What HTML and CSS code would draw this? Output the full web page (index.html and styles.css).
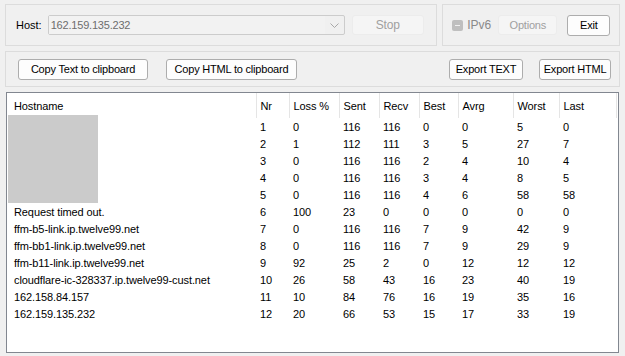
FILE: index.html
```html
<!DOCTYPE html>
<html lang="en">
<head>
    <meta charset="UTF-8">
    <title>WinMTR</title>
    <link rel="stylesheet" href="styles.css">
</head>
<body>

<div class="top-row">
    <!-- host + stop -->
    <div class="group group-host">
        <span class="host-label">Host:</span>
        <div class="combo">
            <span class="combo-text">162.159.135.232</span>
            <span class="combo-arrow">
                <svg width="9" height="6" viewBox="0 0 9 6"><path d="M0.5 0.5 L4.5 4.5 L8.5 0.5" fill="none" stroke="#a8a8a8" stroke-width="1"/></svg>
            </span>
        </div>
        <button class="btn btn-disabled btn-stop">Stop</button>
    </div>

    <!-- ipv6 / options / exit -->
    <div class="group group-opts">
        <span class="check"><span class="check-dash"></span></span>
        <span class="check-label">IPv6</span>
        <button class="btn btn-disabled btn-options">Options</button>
        <button class="btn btn-exit">Exit</button>
    </div>
</div>

<div class="group group-export">
    <button class="btn btn-copy-text">Copy Text to clipboard</button>
    <button class="btn btn-copy-html">Copy HTML to clipboard</button>
    <span class="spacer"></span>
    <button class="btn btn-export-text">Export TEXT</button>
    <button class="btn btn-export-html">Export HTML</button>
</div>

<div class="list">
    <!-- redacted first hops -->
    <div class="masked"></div>
    <table class="report">
        <colgroup>
            <col class="c-host"><col class="c-nr"><col class="c-loss"><col class="c-sent"><col class="c-recv">
            <col class="c-best"><col class="c-avrg"><col class="c-worst"><col class="c-last">
        </colgroup>
        <thead>
            <tr>
                <th>Hostname</th>
                <th>Nr</th>
                <th>Loss %</th>
                <th>Sent</th>
                <th>Recv</th>
                <th>Best</th>
                <th>Avrg</th>
                <th>Worst</th>
                <th>Last</th>
            </tr>
        </thead>
        <tbody>
            <tr><td></td><td>1</td><td>0</td><td>116</td><td>116</td><td>0</td><td>0</td><td>5</td><td>0</td></tr>
            <tr><td></td><td>2</td><td>1</td><td>112</td><td>111</td><td>3</td><td>5</td><td>27</td><td>7</td></tr>
            <tr><td></td><td>3</td><td>0</td><td>116</td><td>116</td><td>2</td><td>4</td><td>10</td><td>4</td></tr>
            <tr><td></td><td>4</td><td>0</td><td>116</td><td>116</td><td>3</td><td>4</td><td>8</td><td>5</td></tr>
            <tr><td></td><td>5</td><td>0</td><td>116</td><td>116</td><td>4</td><td>6</td><td>58</td><td>58</td></tr>
            <tr><td>Request timed out.</td><td>6</td><td>100</td><td>23</td><td>0</td><td>0</td><td>0</td><td>0</td><td>0</td></tr>
            <tr><td>ffm-b5-link.ip.twelve99.net</td><td>7</td><td>0</td><td>116</td><td>116</td><td>7</td><td>9</td><td>42</td><td>9</td></tr>
            <tr><td>ffm-bb1-link.ip.twelve99.net</td><td>8</td><td>0</td><td>116</td><td>116</td><td>7</td><td>9</td><td>29</td><td>9</td></tr>
            <tr><td>ffm-b11-link.ip.twelve99.net</td><td>9</td><td>92</td><td>25</td><td>2</td><td>0</td><td>12</td><td>12</td><td>12</td></tr>
            <tr><td>cloudflare-ic-328337.ip.twelve99-cust.net</td><td>10</td><td>26</td><td>58</td><td>43</td><td>16</td><td>23</td><td>40</td><td>19</td></tr>
            <tr><td>162.158.84.157</td><td>11</td><td>10</td><td>84</td><td>76</td><td>16</td><td>19</td><td>35</td><td>16</td></tr>
            <tr><td>162.159.135.232</td><td>12</td><td>20</td><td>66</td><td>53</td><td>15</td><td>17</td><td>33</td><td>19</td></tr>
        </tbody>
    </table>
</div>

</body>
</html>
```

FILE: styles.css
```css
/* window */
body {
    margin: 0;
    background: #f0f0f0;
    font-family: "Liberation Sans", Arial, sans-serif;
    font-size: 11px;
    color: #000;
    width: 625px;
    height: 356px;
    overflow: hidden;
}

.top-row {
    display: flex;
    gap: 5px;
    padding: 4px 5px 0 5px;
}

/* group boxes */
.group {
    border: 1px solid #dcdcdc;
    box-sizing: border-box;
    display: flex;
    align-items: center;
}
.group-host {
    width: 433px;
    height: 42px;
    padding-left: 10px;
}
.group-opts {
    width: 178px;
    height: 42px;
    padding-left: 9px;
}
.group-export {
    margin: 5px 5px 0 5px;
    height: 36px;
    padding: 0 8px 0 12px;
}
.spacer {
    flex: 1;
}

/* host field */
.host-label {
    margin-right: 6px;
}
.combo {
    width: 297px;
    height: 20px;
    box-sizing: border-box;
    border: 1px solid #cccccc;
    border-radius: 2px;
    display: flex;
    align-items: center;
    background: #f0f0f0;
}
.combo-text {
    flex: 1;
    color: #6d6d6d;
    padding-left: 2px;
    background: #f2f2f2;
    height: 18px;
    line-height: 18px;
    letter-spacing: -0.2px;
}
.combo-arrow {
    width: 19px;
    display: flex;
    justify-content: center;
    align-items: center;
    padding-top: 1px;
}

/* buttons */
.btn {
    font-family: inherit;
    font-size: 11px;
    letter-spacing: -0.2px;
    white-space: nowrap;
    height: 21px;
    box-sizing: border-box;
    padding: 0;
    background: #fdfdfd;
    border: 1px solid #adadad;
    border-radius: 3px;
    color: #000;
}
.btn-disabled {
    background: #f5f5f5;
    border-color: #ececec;
    color: #a0a0a0;
}
.btn-stop {
    width: 72px;
    height: 20px;
    margin-left: 7px;
    font-size: 12px;
}
.btn-options {
    width: 59px;
    height: 20px;
    margin-left: 7px;
}
.btn-exit {
    width: 43px;
    margin-left: 10px;
}
.btn-copy-text {
    width: 130px;
}
.btn-copy-html {
    width: 131px;
    margin-left: 18px;
}
.btn-export-text {
    width: 74px;
}
.btn-export-html {
    width: 72px;
    margin-left: 16px;
}

/* ipv6 checkbox (disabled, indeterminate) */
.check {
    width: 11px;
    height: 11px;
    background: #bfbfbf;
    border-radius: 2px;
    display: flex;
    align-items: center;
    justify-content: center;
}
.check-dash {
    width: 5px;
    height: 1px;
    background: #f0f0f0;
}
.check-label {
    margin-left: 4px;
    font-size: 12px;
    color: #8a8a8a;
}

/* report list */
.list {
    position: relative;
    margin: 5px 6px 0 6px;
    height: 261px;
    border: 1px solid #828790;
    background: #fff;
    box-sizing: border-box;
    overflow: hidden;
}
.masked {
    position: absolute;
    left: 1px;
    top: 22px;
    width: 90px;
    height: 88px;
    background: #cbcbcb;
}
.report {
    border-collapse: collapse;
    table-layout: fixed;
    width: 609px;
    letter-spacing: -0.1px;
}
.report th {
    font-weight: normal;
    text-align: left;
    height: 25px;
    padding: 0 0 0 4px;
    border-right: 1px solid #e5e5e5;
    vertical-align: middle;
}
.report td {
    height: 17px;
    padding: 0 0 0 4px;
    white-space: nowrap;
    overflow: hidden;
}
.report th:first-child,
.report td:first-child {
    padding-left: 7px;
}
.c-host { width: 249px; }
.c-nr { width: 33px; }
.c-loss { width: 50px; }
.c-sent { width: 40px; }
.c-recv { width: 40px; }
.c-best { width: 39px; }
.c-avrg { width: 55px; }
.c-worst { width: 46px; }
.c-last { width: 57px; }
```
